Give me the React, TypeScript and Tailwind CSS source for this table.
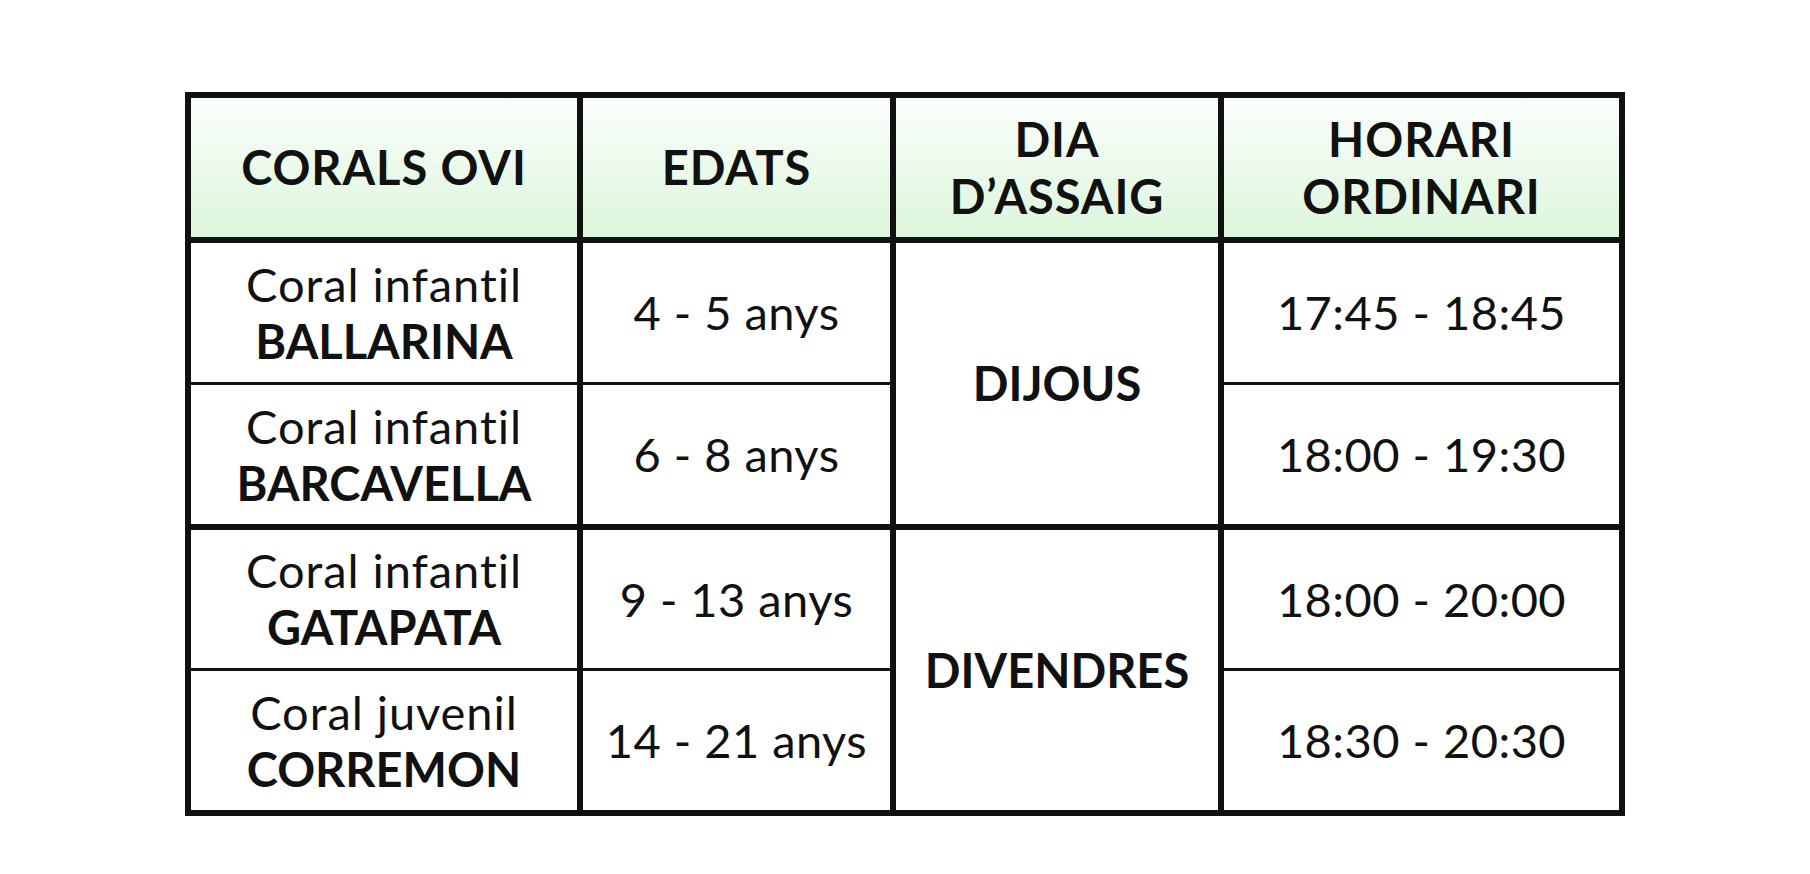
const rows = [
  { group: "Coral infantil", name: "BALLARINA", ages: "4 - 5 anys", time: "17:45 - 18:45" },
  { group: "Coral infantil", name: "BARCAVELLA", ages: "6 - 8 anys", time: "18:00 - 19:30" },
  { group: "Coral infantil", name: "GATAPATA", ages: "9 - 13 anys", time: "18:00 - 20:00" },
  { group: "Coral juvenil", name: "CORREMON", ages: "14 - 21 anys", time: "18:30 - 20:30" },
];

// grid row tracks: header, line, r1, thin, r2, line, r3, thin, r4
const rowStart = ["row-start-3", "row-start-5", "row-start-7", "row-start-9"];

function HeaderCell({ children }: { children: React.ReactNode }) {
  return (
    <div className="row-start-1 flex items-center justify-center bg-gradient-to-b from-[#fbfefb] to-[#dcf6dc] text-center font-bold leading-[57px] tracking-[0.02em] text-[47px] text-[#111]">
      <div>{children}</div>
    </div>
  );
}

export default function App() {
  return (
    <div
      className="min-h-screen w-full bg-white pt-[92px]"
      style={{ fontFamily: "Lato, 'Open Sans', sans-serif" }}
    >
      <div className="mx-auto grid w-[1440px] grid-cols-[386px_307px_322px_395px] grid-rows-[139px_6px_139px_3px_139px_6px_138px_3px_139px] gap-x-[6px] bg-[#111] p-[6px] text-[#111]">
        <HeaderCell>CORALS OVI</HeaderCell>
        <HeaderCell>EDATS</HeaderCell>
        <HeaderCell>
          DIA
          <br />
          D’ASSAIG
        </HeaderCell>
        <HeaderCell>
          HORARI
          <br />
          ORDINARI
        </HeaderCell>

        {rows.map((r, i) => (
          <div
            key={r.name}
            className={`${rowStart[i]} col-start-1 flex flex-col items-center justify-center bg-white text-[47px] leading-[57px]`}
          >
            <span className="tracking-[0.02em]">{r.group}</span>
            <span className="font-bold">{r.name}</span>
          </div>
        ))}
        {rows.map((r, i) => (
          <div
            key={r.ages}
            className={`${rowStart[i]} col-start-2 flex items-center justify-center bg-white text-[47px] tracking-[0.01em]`}
          >
            {r.ages}
          </div>
        ))}
        <div className="col-start-3 row-span-3 row-start-3 flex items-center justify-center bg-white text-[47px] font-bold">
          DIJOUS
        </div>
        <div className="col-start-3 row-span-3 row-start-7 flex items-center justify-center bg-white text-[47px] font-bold">
          DIVENDRES
        </div>
        {rows.map((r, i) => (
          <div
            key={r.time + i}
            className={`${rowStart[i]} col-start-4 flex items-center justify-center bg-white text-[47px] tracking-[0.01em]`}
          >
            {r.time}
          </div>
        ))}
      </div>
    </div>
  );
}
